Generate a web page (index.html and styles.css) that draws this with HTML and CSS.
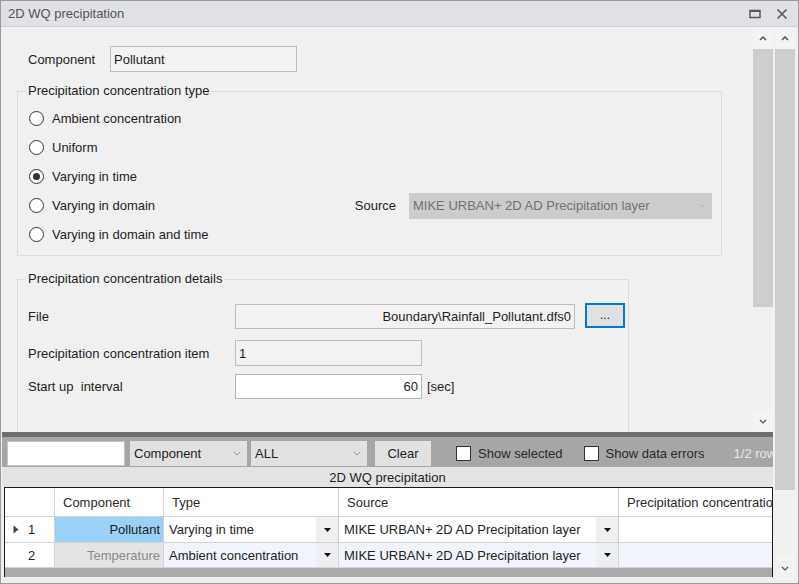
FILE: index.html
```html
<!DOCTYPE html>
<html lang="en">
<head>
  <meta charset="UTF-8" />
  <title>2D WQ precipitation</title>
  <link rel="stylesheet" href="styles.css">
</head>
<body>

<div class="window">

  <div class="titlebar">
    <span class="title">2D WQ precipitation</span>
    <div class="title-buttons">
      <svg width="12" height="10" viewBox="0 0 12 10"><rect x="1" y="1.5" width="10" height="7" fill="none" stroke="#5a5a5a" stroke-width="1.5"/><line x1="1" y1="2" x2="11" y2="2" stroke="#5a5a5a" stroke-width="2"/></svg>
      <svg width="12" height="12" viewBox="0 0 12 12"><path d="M1.5 1.5 L10.5 10.5 M10.5 1.5 L1.5 10.5" stroke="#5a5a5a" stroke-width="1.6" fill="none"/></svg>
    </div>
  </div>

  <div class="frame">
    <div class="left">

      <div class="upper">
        <div class="form">
          <div class="comp-row">
            <label>Component</label>
            <div class="textbox readonly comp-box">Pollutant</div>
          </div>

          <fieldset class="group type-group">
            <legend>Precipitation concentration type</legend>
            <div class="radio-row"><span class="radio"></span><span>Ambient concentration</span></div>
            <div class="radio-row"><span class="radio"></span><span>Uniform</span></div>
            <div class="radio-row"><span class="radio checked"></span><span>Varying in time</span></div>
            <div class="radio-row">
              <span class="radio"></span><span>Varying in domain</span>
              <div class="source">
                <span>Source</span>
                <div class="combo disabled">
                  <span>MIKE URBAN+ 2D AD Precipitation layer</span>
                  <svg width="8" height="5" viewBox="0 0 8 5"><polyline points="1,1 4,4 7,1" fill="none" stroke="#b5b5b5" stroke-width="1"/></svg>
                </div>
              </div>
            </div>
            <div class="radio-row"><span class="radio"></span><span>Varying in domain and time</span></div>
          </fieldset>

          <fieldset class="group details-group">
            <legend>Precipitation concentration details</legend>
            <div class="field-row file-row">
              <label>File</label>
              <div class="textbox readonly file-box">Boundary\Rainfall_Pollutant.dfs0</div>
              <button class="browse">...</button>
            </div>
            <div class="field-row item-row">
              <label>Precipitation concentration item</label>
              <div class="textbox readonly short-box">1</div>
            </div>
            <div class="field-row start-row">
              <label>Start up&nbsp; interval</label>
              <div class="textbox short-box num">60</div>
              <span class="unit">[sec]</span>
            </div>
          </fieldset>
        </div>

        <div class="vscroll inner">
          <div class="arrow"><svg width="8" height="5" viewBox="0 0 8 5"><polyline points="1,4 4,1 7,4" fill="none" stroke="#555" stroke-width="1.5"/></svg></div>
          <div class="thumb"></div>
          <div class="track"></div>
          <div class="arrow"><svg width="8" height="5" viewBox="0 0 8 5"><polyline points="1,1 4,4 7,1" fill="none" stroke="#555" stroke-width="1.2"/></svg></div>
        </div>
      </div>

      <div class="splitter"></div>

      <div class="toolbar">
        <div class="tb-input"></div>
        <div class="tb-combo comp-combo">Component<svg width="8" height="5" viewBox="0 0 8 5"><polyline points="1,1 4,4 7,1" fill="none" stroke="#9a9a9a" stroke-width="1"/></svg></div>
        <div class="tb-combo all-combo">ALL<svg width="8" height="5" viewBox="0 0 8 5"><polyline points="1,1 4,4 7,1" fill="none" stroke="#9a9a9a" stroke-width="1"/></svg></div>
        <button class="tb-button">Clear</button>
        <span class="check first"></span><span class="check-label">Show selected</span>
        <span class="check"></span><span class="check-label">Show data errors</span>
        <span class="row-count">1/2 rows</span>
      </div>

      <div class="caption">2D WQ precipitation</div>

      <div class="grid">
        <div class="grid-rows">
          <div class="cell head rh"></div>
          <div class="cell head">Component</div>
          <div class="cell head">Type</div>
          <div class="cell head">Source</div>
          <div class="cell head last">Precipitation concentration</div>

          <div class="cell rh"><span class="marker"><svg width="6" height="9" viewBox="0 0 6 9"><path d="M0.5 0.5 L5.5 4.5 L0.5 8.5 Z" fill="#444"/></svg></span>1</div>
          <div class="cell comp selected">Pollutant</div>
          <div class="cell dd"><span>Varying in time</span><span class="dd-btn"><svg width="7" height="4" viewBox="0 0 7 4"><path d="M0 0 L7 0 L3.5 4 Z" fill="#111"/></svg></span></div>
          <div class="cell dd"><span>MIKE URBAN+ 2D AD Precipitation layer</span><span class="dd-btn"><svg width="7" height="4" viewBox="0 0 7 4"><path d="M0 0 L7 0 L3.5 4 Z" fill="#111"/></svg></span></div>
          <div class="cell last"></div>

          <div class="cell rh"><span class="marker"></span>2</div>
          <div class="cell comp readonly-cell">Temperature</div>
          <div class="cell dd alt"><span>Ambient concentration</span><span class="dd-btn"><svg width="7" height="4" viewBox="0 0 7 4"><path d="M0 0 L7 0 L3.5 4 Z" fill="#111"/></svg></span></div>
          <div class="cell dd alt"><span>MIKE URBAN+ 2D AD Precipitation layer</span><span class="dd-btn"><svg width="7" height="4" viewBox="0 0 7 4"><path d="M0 0 L7 0 L3.5 4 Z" fill="#111"/></svg></span></div>
          <div class="cell alt last"></div>
        </div>
      </div>

    </div>

    <div class="vscroll outer">
      <div class="arrow"><svg width="8" height="5" viewBox="0 0 8 5"><polyline points="1,4 4,1 7,4" fill="none" stroke="#555" stroke-width="1.5"/></svg></div>
      <div class="thumb"></div>
      <div class="track"></div>
      <div class="arrow"><svg width="8" height="5" viewBox="0 0 8 5"><polyline points="1,1 4,4 7,1" fill="none" stroke="#555" stroke-width="1.2"/></svg></div>
    </div>
  </div>

</div>

</body>
</html>
```

FILE: styles.css
```css
body { margin: 0; font-family: "Liberation Sans", Arial, sans-serif; font-size: 13px; color: #1e1e1e; background: #f0f0f0; }
.window { width: 799px; height: 584px; box-sizing: border-box; border: 1px solid #9c9c9c; display: flex; flex-direction: column; overflow: hidden; }

.titlebar { height: 26px; flex: none; background: #dfe1e5; border-bottom: 1px solid #cfd1d5; box-sizing: border-box; display: flex; align-items: center; padding-left: 7px; }
.title { color: #555; }
.title-buttons { margin-left: auto; display: flex; align-items: center; gap: 15px; padding-right: 10px; }

.frame { flex: 1; display: flex; gap: 2px; padding: 0 3px 0 1px; background: #f0f0f0; min-height: 0; }
.left { width: 771px; display: flex; flex-direction: column; }

.upper { height: 405px; flex: none; display: flex; }
.form { width: 751px; overflow: hidden; box-sizing: border-box; padding: 19px 0 0 15px; }

.comp-row { display: flex; align-items: center; height: 26px; margin-left: 11px; }
.comp-row label { width: 82px; }
.textbox { box-sizing: border-box; border: 1px solid #b4b4b4; background: #fff; display: flex; align-items: center; padding: 0 3px; flex: none; }
.textbox.readonly { background: #f2f2f2; border-color: #bdbdbd; }
.comp-box { width: 187px; height: 26px; }

.group { margin: 11px 0 0 0; border: 1px solid #dcdcdc; padding: 5px 9px 6px 10px; min-width: 0; box-sizing: border-box; }
.group legend { padding: 0 2px; margin-left: -2px; line-height: 16px; }
.type-group { width: 705px; }
.radio-row { height: 29px; display: flex; align-items: center; }
.radio { width: 15px; height: 15px; box-sizing: border-box; border: 1px solid #333; border-radius: 50%; background: #fff; margin: 0 8px 0 1px; display: flex; align-items: center; justify-content: center; }
.radio.checked::after { content: ""; width: 7px; height: 7px; border-radius: 50%; background: #333; }
.source { margin-left: auto; display: flex; align-items: center; gap: 13px; }
.combo { width: 303px; height: 26px; box-sizing: border-box; display: flex; align-items: center; justify-content: space-between; padding: 0 6px 0 4px; }
.combo.disabled { background: #cccccc; color: #727272; }

.details-group { width: 612px; height: 220px; margin-top: 15px; padding: 15px 3px 0 10px; }
.field-row { display: flex; align-items: center; }
.field-row label { width: 207px; flex: none; }
.file-row { height: 28px; }
.file-box { width: 340px; height: 25px; justify-content: flex-end; }
.browse { flex: none; margin: 0 0 1px 10px; width: 40px; height: 25px; box-sizing: border-box; border: 2px solid #0078d7; background: #e1e1e1; font: inherit; font-size: 12px; padding: 0 0 2px; color: #222; }
.item-row { margin-top: 10px; }
.item-row .short-box { height: 26px; }
.start-row { margin-top: 8px; }
.short-box { width: 187px; height: 25px; }
.num { justify-content: flex-end; }
.unit { margin-left: 5px; }

.vscroll { width: 20px; flex: none; display: flex; flex-direction: column; background: #f0f0f0; }
.vscroll .arrow { height: 22px; flex: none; display: flex; align-items: center; justify-content: center; background: #f3f3f3; }
.vscroll .thumb { background: #cdcdcd; flex: none; }
.vscroll .track { flex: 1; }
.inner .thumb { height: 258px; }
.outer { margin-bottom: 4px; }
.outer .thumb { height: 441px; }

.splitter { height: 5px; flex: none; background: #6e6e6e; }

.toolbar { height: 30px; flex: none; box-sizing: border-box; background: #a6a6a6; display: flex; align-items: flex-start; padding: 4px 0 0 5px; overflow: hidden; white-space: nowrap; }
.toolbar > * { flex: none; }
.tb-input { width: 118px; height: 25px; box-sizing: border-box; background: #fff; border: 1px solid #c4c4c4; margin-right: 5px; }
.tb-combo { height: 25px; box-sizing: border-box; background: #e1e1e1; display: flex; align-items: center; justify-content: space-between; padding: 0 6px 0 4px; }
.comp-combo { width: 117px; margin-right: 4px; }
.all-combo { width: 116px; margin-right: 8px; }
.tb-button { width: 56px; height: 25px; border: none; background: #e1e1e1; font: inherit; color: #222; padding: 0; }
.check { width: 15px; height: 15px; box-sizing: border-box; background: #fff; border: 1px solid #333; margin: 5px 7px 0 21px; }
.check.first { margin-left: 25px; }
.check-label { line-height: 25px; color: #2a2a2a; }
.row-count { line-height: 25px; margin-left: 29px; color: #e9e9e9; }

.caption { height: 20px; flex: none; background: #e4e4e4; display: flex; align-items: center; justify-content: center; }

.grid { height: 90px; flex: none; margin-left: 2px; width: 769px; box-sizing: border-box; border: 1px solid #1a1a1a; border-bottom: none; background: #a9a9a9; overflow: hidden; }
.grid-rows { display: grid; grid-template-columns: 50px 109px 175px 280px 1fr; grid-template-rows: 29px 26px 25px; background: #fff; }
.cell { box-sizing: border-box; border-right: 1px solid #d4d4d4; border-bottom: 1px solid #d4d4d4; display: flex; align-items: center; padding: 0 5px; white-space: nowrap; overflow: hidden; background: #fff; }
.cell.last { border-right: none; }
.cell.head { padding-left: 8px; color: #2a2a2a; }
.cell.rh { padding-left: 8px; }
.marker { width: 15px; flex: none; display: flex; align-items: center; }
.cell.comp { justify-content: flex-end; padding-right: 3px; }
.cell.selected { background: #99d1f7; }
.cell.readonly-cell { background: #e4e4e4; color: #8a8a8a; }
.cell.alt { background: #f1f5fb; }
.cell.dd { padding-right: 0; justify-content: space-between; }
.dd-btn { width: 22px; height: 100%; flex: none; background: #efefef; display: flex; align-items: center; justify-content: center; }
.cell.alt .dd-btn { background: #eceef2; }
```
